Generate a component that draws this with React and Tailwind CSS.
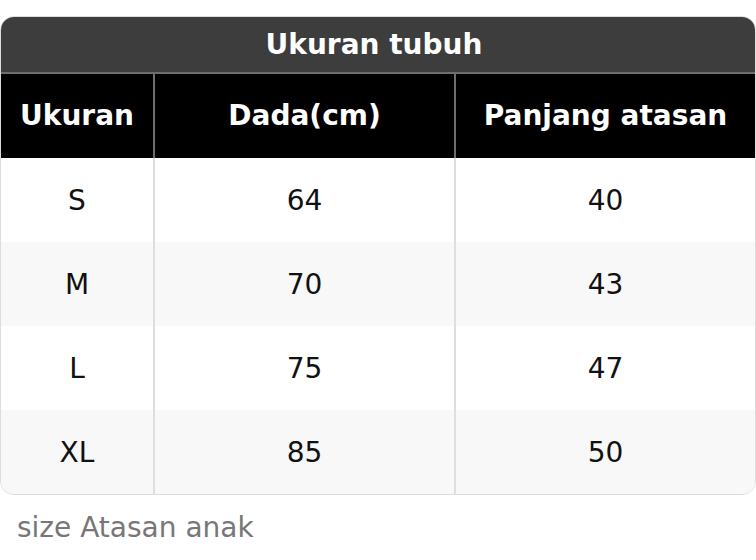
export default function App() {
  const rows = [
    ["S", "64", "40"],
    ["M", "70", "43"],
    ["L", "75", "47"],
    ["XL", "85", "50"],
  ];
  const font = { fontFamily: '"DejaVu Sans", sans-serif' };
  return (
    <div className="w-[756px] h-[560px] bg-white pt-[16px]" style={font}>
      <div className="rounded-[14px] overflow-hidden border border-[#dcdcdc]">
        <div className="h-[57px] bg-[#3d3d3d] text-white font-bold text-[28px] flex items-center justify-center pr-[8px] border-b-2 border-[#6e6e6e]">
          Ukuran tubuh
        </div>
        <div className="grid grid-cols-[154px_301px_1fr]">
          {["Ukuran", "Dada(cm)", "Panjang atasan"].map((h, i) => (
            <div
              key={h}
              className={`h-[84px] bg-black text-white font-bold text-[28px] flex items-center justify-center ${i < 2 ? "border-r-2 border-[#6e6e6e]" : ""}`}
            >
              {h}
            </div>
          ))}
          {rows.map((r, ri) =>
            r.map((c, ci) => (
              <div
                key={ri + "-" + ci}
                className={`h-[84px] text-[#111] text-[28px] pt-[2px] flex items-center justify-center ${ri % 2 === 1 ? "bg-[#f8f8f8]" : "bg-white"} ${ci < 2 ? "border-r-2 border-[#dedede]" : ""}`}
              >
                {c}
              </div>
            ))
          )}
        </div>
      </div>
      <div className="pl-[17px] pt-[15px] text-[28px] leading-[36px] text-[#777]">size Atasan anak</div>
    </div>
  );
}
